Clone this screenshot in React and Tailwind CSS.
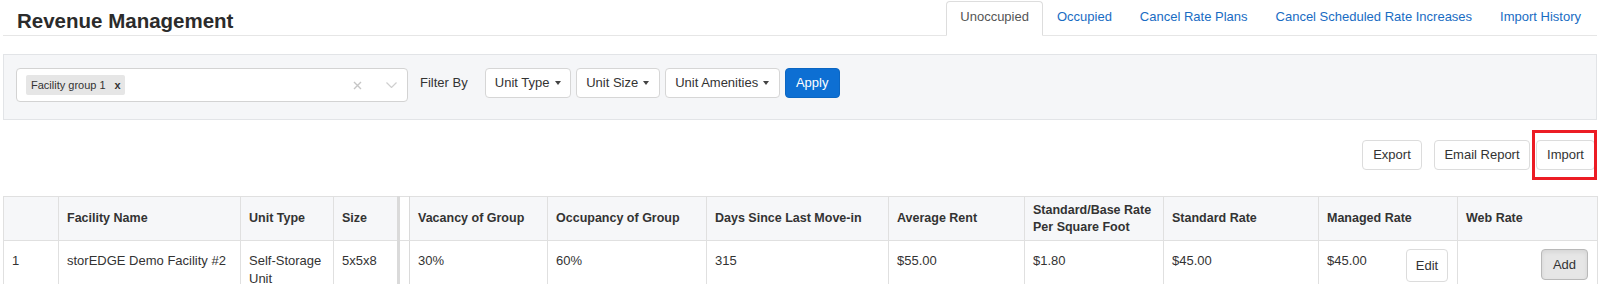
import React from 'react';

const tabs = ['Unoccupied', 'Occupied', 'Cancel Rate Plans', 'Cancel Scheduled Rate Increases', 'Import History'];

const Caret = () => (
  <span className="ml-[5px] inline-block h-0 w-0 border-x-[3.5px] border-t-[4px] border-x-transparent border-t-[#444]" />
);

const FilterButton = ({ label, width }) => (
  <button
    className={`flex h-[30px] items-center justify-center rounded-[4px] border border-[#d6d6d6] bg-white text-[13px] text-[#333] ${width}`}
  >
    {label}
    <Caret />
  </button>
);

const App = () => {
  return (
    <div className="min-h-[284px] w-full bg-white px-[3px] font-['Liberation_Sans',Arial,sans-serif] text-[13px] text-[#333]">
      {/* header with tabs */}
      <div className="flex h-[36px] items-end justify-between border-b border-[#e6e6e6]">
        <h1 className="pl-[14px] text-[20.5px] font-bold leading-[28px] text-[#2b2b2b]">Revenue Management</h1>
        <ul className="mb-[-1px] flex pr-[2px]">
          {tabs.map((tab, i) => (
            <li
              key={tab}
              className={`h-[35px] rounded-t-[4px] border px-[13px] pb-[9px] pt-[6px] leading-[18px] ${
                i === 0
                  ? 'border-[#dddddd] border-b-white bg-white text-[#555]'
                  : 'border-transparent text-[#196cc3]'
              }`}
            >
              {tab}
            </li>
          ))}
        </ul>
      </div>

      {/* filter panel */}
      <div className="mt-[18px] flex h-[66px] items-start border border-[#e2e4e7] bg-[#f5f6f8] px-[12px] pt-[13px]">
        <div className="flex h-[34px] w-[392px] items-center rounded-[4px] border border-[#d3d3d3] bg-white">
          <span className="ml-[9px] flex h-[20px] items-center rounded-[2px] bg-[#e6e6e6] pl-[5px] pr-[4px] text-[11px] text-[#333]">
            Facility group 1
            <span className="ml-[9px] text-[11px] font-bold">x</span>
          </span>
          <div className="flex-1" />
          <svg width="9" height="9" viewBox="0 0 9 9" className="mr-[24px]">
            <path d="M1 1 L8 8 M8 1 L1 8" stroke="#c6c6c6" strokeWidth="1.4" fill="none" />
          </svg>
          <svg width="11" height="6" viewBox="0 0 11 6" className="mr-[10px]">
            <polyline points="0.5,0.5 5.5,5.5 10.5,0.5" stroke="#cfcfcf" strokeWidth="1.2" fill="none" />
          </svg>
        </div>
        <span className="ml-[12px] mt-[6px] leading-[18px]">Filter By</span>
        <div className="ml-[17px] flex gap-[5px]">
          <FilterButton label="Unit Type" width="w-[86px]" />
          <FilterButton label="Unit Size" width="w-[84px]" />
          <FilterButton label="Unit Amenities" width="w-[115px]" />
          <button className="h-[30px] w-[55px] rounded-[4px] border border-[#0b66c2] bg-[#0d6fd3] text-[13px] text-white">
            Apply
          </button>
        </div>
      </div>

      {/* actions */}
      <div className="mt-[20px] flex justify-end pr-[2px]">
        <button className="h-[30px] w-[60px] rounded-[4px] border border-[#dcdcdc] bg-white text-[13px]">Export</button>
        <button className="ml-[12px] h-[30px] w-[96px] rounded-[4px] border border-[#dcdcdc] bg-white text-[13px]">
          Email Report
        </button>
        <span className="relative ml-[6px]">
          <button className="h-[30px] w-[59px] rounded-[4px] border border-[#dcdcdc] bg-white text-[13px]">Import</button>
          <span className="absolute -bottom-[10px] -left-[4px] -right-[2px] -top-[10px] border-[3px] border-[#ec1c24]" />
        </span>
      </div>

      {/* table */}
      <table className="mt-[26px] w-[1594px] table-fixed border-collapse">
        <colgroup>
          <col className="w-[55px]" />
          <col className="w-[182px]" />
          <col className="w-[93px]" />
          <col className="w-[65px]" />
          <col className="w-[11px]" />
          <col className="w-[138px]" />
          <col className="w-[159px]" />
          <col className="w-[182px]" />
          <col className="w-[136px]" />
          <col className="w-[139px]" />
          <col className="w-[155px]" />
          <col className="w-[139px]" />
          <col className="w-[140px]" />
        </colgroup>
        <thead>
          <tr className="bg-[#f6f7f9] text-left text-[12.5px] font-bold leading-[17px] text-[#333]">
            <th className="h-[44px] border border-[#e0e0e0] px-[8px] align-middle" />
            <th className="border border-[#e0e0e0] px-[8px] align-middle">Facility Name</th>
            <th className="border border-[#e0e0e0] px-[8px] align-middle">Unit Type</th>
            <th className="border border-[#e0e0e0] px-[8px] align-middle">Size</th>
            <th className="border-y border-l-[3px] border-r border-[#dadada] border-y-[#e0e0e0] bg-white" />
            <th className="border border-[#e0e0e0] px-[8px] align-middle">Vacancy of Group</th>
            <th className="border border-[#e0e0e0] px-[8px] align-middle">Occupancy of Group</th>
            <th className="border border-[#e0e0e0] px-[8px] align-middle">Days Since Last Move-in</th>
            <th className="border border-[#e0e0e0] px-[8px] align-middle">Average Rent</th>
            <th className="border border-[#e0e0e0] px-[8px] align-middle whitespace-nowrap">
              Standard/Base Rate
              <br />
              Per Square Foot
            </th>
            <th className="border border-[#e0e0e0] px-[8px] align-middle">Standard Rate</th>
            <th className="border border-[#e0e0e0] px-[8px] align-middle">Managed Rate</th>
            <th className="border border-[#e0e0e0] px-[8px] align-middle">Web Rate</th>
          </tr>
        </thead>
        <tbody>
          <tr className="text-left leading-[18px]">
            <td className="border border-[#e0e0e0] px-[8px] pb-[8px] pt-[11px] align-top">1</td>
            <td className="border border-[#e0e0e0] px-[8px] pb-[8px] pt-[11px] align-top">storEDGE Demo Facility #2</td>
            <td className="border border-[#e0e0e0] px-[8px] pb-[8px] pt-[11px] align-top">Self-Storage Unit</td>
            <td className="border border-[#e0e0e0] px-[8px] pb-[8px] pt-[11px] align-top">5x5x8</td>
            <td className="border-y border-l-[3px] border-r border-[#dadada] border-y-[#e0e0e0]" />
            <td className="border border-[#e0e0e0] px-[8px] pb-[8px] pt-[11px] align-top">30%</td>
            <td className="border border-[#e0e0e0] px-[8px] pb-[8px] pt-[11px] align-top">60%</td>
            <td className="border border-[#e0e0e0] px-[8px] pb-[8px] pt-[11px] align-top">315</td>
            <td className="border border-[#e0e0e0] px-[8px] pb-[8px] pt-[11px] align-top">$55.00</td>
            <td className="border border-[#e0e0e0] px-[8px] pb-[8px] pt-[11px] align-top">$1.80</td>
            <td className="border border-[#e0e0e0] px-[8px] pb-[8px] pt-[11px] align-top">$45.00</td>
            <td className="border border-[#e0e0e0] pb-[8px] pl-[8px] pr-[9px] pt-[8px] align-top">
              <div className="flex items-start justify-between">
                <span className="pt-[3px]">$45.00</span>
                <button className="h-[33px] w-[42px] rounded-[4px] border border-[#dcdcdc] bg-white text-[13px]">
                  Edit
                </button>
              </div>
            </td>
            <td className="border border-[#e0e0e0] pb-[8px] pl-[8px] pr-[9px] pt-[8px] align-top">
              <div className="flex justify-end">
                <button className="h-[31px] w-[47px] rounded-[4px] border border-[#b9b9b9] bg-[#e6e6e6] text-[13px] shadow-[inset_0_2px_4px_rgba(0,0,0,0.08)]">
                  Add
                </button>
              </div>
            </td>
          </tr>
        </tbody>
      </table>
    </div>
  );
};

export default App;
